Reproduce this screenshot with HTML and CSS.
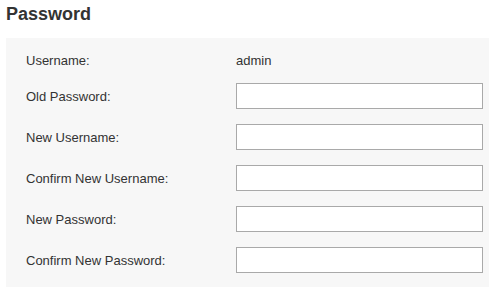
FILE: index.html
```html
<!DOCTYPE html>
<html>
<head>
<meta charset="utf-8">
<link rel="stylesheet" href="styles.css">
</head>
<body>
<div class="page">
  <h2 class="title">Password</h2>
  <div class="panel">
    <div class="row row-static">
      <span class="label">Username:</span>
      <span class="value">admin</span>
    </div>
    <div class="row">
      <label class="label">Old Password:</label>
      <input class="field" type="password">
    </div>
    <div class="row">
      <label class="label">New Username:</label>
      <input class="field" type="text">
    </div>
    <div class="row">
      <label class="label">Confirm New Username:</label>
      <input class="field" type="text">
    </div>
    <div class="row">
      <label class="label">New Password:</label>
      <input class="field" type="password">
    </div>
    <div class="row">
      <label class="label">Confirm New Password:</label>
      <input class="field" type="password">
    </div>
  </div>
</div>
</body>
</html>
```
FILE: styles.css
```css
html, body {
  margin: 0;
  padding: 0;
  background: #fff;
}
body {
  font-family: "Liberation Sans", Arial, sans-serif;
  color: #333;
}
.page {
  padding: 0 6px;
}
.title {
  margin: 4px 0 13px 0;
  font-size: 18px;
  line-height: 21px;
  font-weight: bold;
  color: #333;
}
.panel {
  width: 483px;
  box-sizing: border-box;
  background: #f7f7f7;
  padding: 12px 6px 15px 20px;
  display: flex;
  flex-direction: column;
  gap: 15px;
}
.row {
  display: grid;
  grid-template-columns: 210px 247px;
  align-items: center;
  height: 26px;
  font-size: 13px;
}
.row-static {
  height: 20px;
  margin-bottom: -2px;
}
.label, .value {
  font-size: 13px;
  color: #333;
}
.field {
  box-sizing: border-box;
  width: 247px;
  height: 26px;
  margin: 0;
  border: 1px solid #a9a9a9;
  background: #fff;
  padding: 0 4px;
  font: 13px "Liberation Sans", Arial, sans-serif;
  outline: none;
}
```
